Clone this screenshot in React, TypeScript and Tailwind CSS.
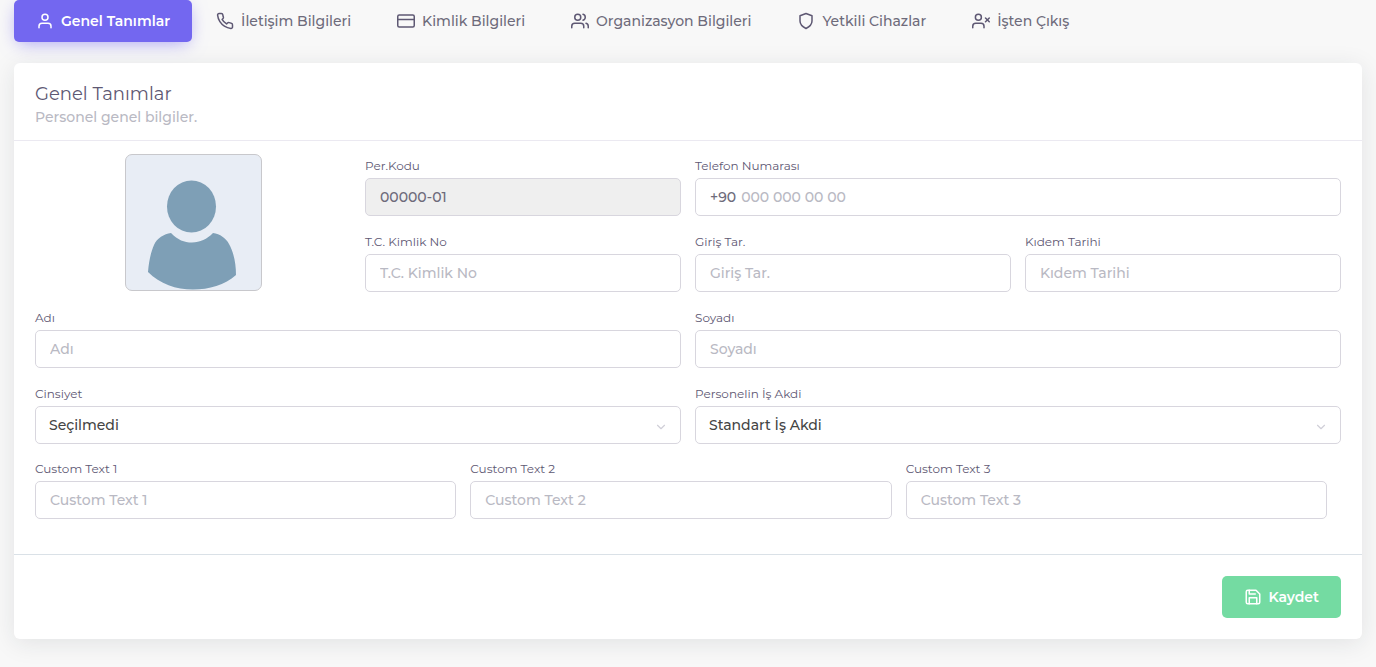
import React from "react";
import {
  FiChevronDown,
  FiCreditCard,
  FiPhone,
  FiSave,
  FiShield,
  FiUser,
  FiUserX,
  FiUsers,
} from "react-icons/fi";

const tabs = [
  { label: "Genel Tanımlar", icon: FiUser },
  { label: "İletişim Bilgileri", icon: FiPhone },
  { label: "Kimlik Bilgileri", icon: FiCreditCard },
  { label: "Organizasyon Bilgileri", icon: FiUsers },
  { label: "Yetkili Cihazlar", icon: FiShield },
  { label: "İşten Çıkış", icon: FiUserX },
];

const controlClass =
  "block h-[38px] w-full rounded-[5px] border border-[#d8d6de] bg-white px-3.5 text-sm font-medium text-[#6e6b7b] outline-none placeholder:text-[#b9b9c3] focus:border-[#7367f0] disabled:bg-[#efefef]";

const labelClass = "block text-xs leading-6 text-[#5e5873]";

type FieldProps = {
  id: string;
  label: string;
  value?: string;
  disabled?: boolean;
  className?: string;
};

const TextField = ({ id, label, value, disabled, className }: FieldProps) => {
  return (
    <div className={className}>
      <label htmlFor={id} className={labelClass}>
        {label}
      </label>
      <input
        id={id}
        type="text"
        placeholder={label}
        defaultValue={value}
        disabled={disabled}
        className={controlClass}
      />
    </div>
  );
};

type SelectProps = {
  id: string;
  label: string;
  options: string[];
};

const SelectField = ({ id, label, options }: SelectProps) => {
  return (
    <div className="col-span-2">
      <label htmlFor={id} className={labelClass}>
        {label}
      </label>
      <div className="relative">
        <select
          id={id}
          className="block h-[38px] w-full appearance-none rounded-[5px] border border-[#d8d6de] bg-white px-[13px] text-sm font-medium text-[#444444] outline-none focus:border-[#7367f0]"
        >
          {options.map((option) => (
            <option key={option}>{option}</option>
          ))}
        </select>
        <FiChevronDown
          size={14}
          className="pointer-events-none absolute top-3.5 right-[13px] text-[#d0cfd8]"
        />
      </div>
    </div>
  );
};

const Avatar = () => {
  return (
    <div className="row-span-2 flex justify-center">
      <div className="h-[137px] w-[137px] overflow-hidden rounded-[7px] border border-[#c8c8cc] bg-[#e8edf5]">
        <svg
          viewBox="0 0 135 135"
          className="h-full w-full"
          role="img"
          aria-label="Personel"
        >
          <ellipse cx="65.500" cy="51.500" rx="24.500" ry="26" fill="#7e9fb6" />
          <path
            d="M45 78 C52 85 58 87.500 66 87.500 C74 87.500 81 84 87 78 C94 79 100 83 103 89 C108 98 110 109 110 120 C99 130 83 134.500 67 134.500 C50 134.500 34 129 22 117 C23 105 25 97 28 90 C31 83 38 79 45 78 Z"
            fill="#7e9fb6"
          />
        </svg>
      </div>
    </div>
  );
};

const App = () => {
  return (
    <div className="min-h-screen bg-[#f8f8f8] px-3.5 pb-7 font-['Montserrat','Inter',sans-serif] text-[#6e6b7b]">
      <nav className="mb-[21px] flex gap-0.5">
        {tabs.map(({ label, icon: Icon }, index) => (
          <button
            key={label}
            type="button"
            className={
              index === 0
                ? "flex h-[42px] items-center gap-[7px] rounded-[5px] bg-[#7367f0] px-[22px] text-sm font-semibold whitespace-nowrap text-white shadow-[0_4px_18px_-4px_rgba(115,103,240,0.65)]"
                : "flex h-[42px] items-center gap-[7px] px-[22px] text-sm font-medium whitespace-nowrap text-[#6e6b7b]"
            }
          >
            <Icon
              size={18}
              className={index === 0 ? "shrink-0" : "shrink-0 text-[#5e5873]"}
            />
            {label}
          </button>
        ))}
      </nav>

      <form className="rounded-md bg-white shadow-[0_4px_24px_0_rgba(34,41,47,0.1)]">
        <div className="border-b border-[#ebe9f1] px-[21px] pt-5 pb-[11px]">
          <h4 className="text-lg leading-[22px] text-[#5e5873]">
            Genel Tanımlar
          </h4>
          <p className="text-sm leading-6 font-medium text-[#b9b9c3]">
            Personel genel bilgiler.
          </p>
        </div>

        <div className="flex flex-col gap-[13px] px-[21px] pt-[13px] pb-[35px]">
          <div className="grid grid-cols-4 gap-3.5">
            <Avatar />
            <TextField id="kod" label="Per.Kodu" value="00000-01" disabled />
            <div className="col-span-2">
              <label htmlFor="telefon" className={labelClass}>
                Telefon Numarası
              </label>
              <div className="flex h-[38px] items-center gap-[5px] rounded-[5px] border border-[#d8d6de] bg-white px-3.5 text-sm font-medium focus-within:border-[#7367f0]">
                <span className="text-[#6e6b7b]">+90</span>
                <input
                  id="telefon"
                  type="tel"
                  placeholder="000 000 00 00"
                  className="min-w-0 flex-1 bg-transparent outline-none placeholder:text-[#b9b9c3]"
                />
              </div>
            </div>
            <TextField id="kimlik" label="T.C. Kimlik No" />
            <TextField id="giris" label="Giriş Tar." />
            <TextField id="kidem" label="Kıdem Tarihi" />
            <TextField id="adi" label="Adı" className="col-span-2" />
            <TextField id="soyadi" label="Soyadı" className="col-span-2" />
            <SelectField
              id="cinsiyet"
              label="Cinsiyet"
              options={["Seçilmedi"]}
            />
            <SelectField
              id="akit"
              label="Personelin İş Akdi"
              options={["Standart İş Akdi"]}
            />
          </div>
          <div className="grid grid-cols-3 gap-3.5 pr-3.5">
            <TextField id="custom1" label="Custom Text 1" />
            <TextField id="custom2" label="Custom Text 2" />
            <TextField id="custom3" label="Custom Text 3" />
          </div>
        </div>

        <div className="flex justify-end border-t border-[#dae1e7] p-[21px]">
          <button
            type="button"
            className="flex h-[42px] items-center gap-[7px] rounded-[5px] bg-[#74dba2] px-[22px] text-sm font-semibold text-white"
          >
            <FiSave size={18} />
            Kaydet
          </button>
        </div>
      </form>
    </div>
  );
};

export default App;
